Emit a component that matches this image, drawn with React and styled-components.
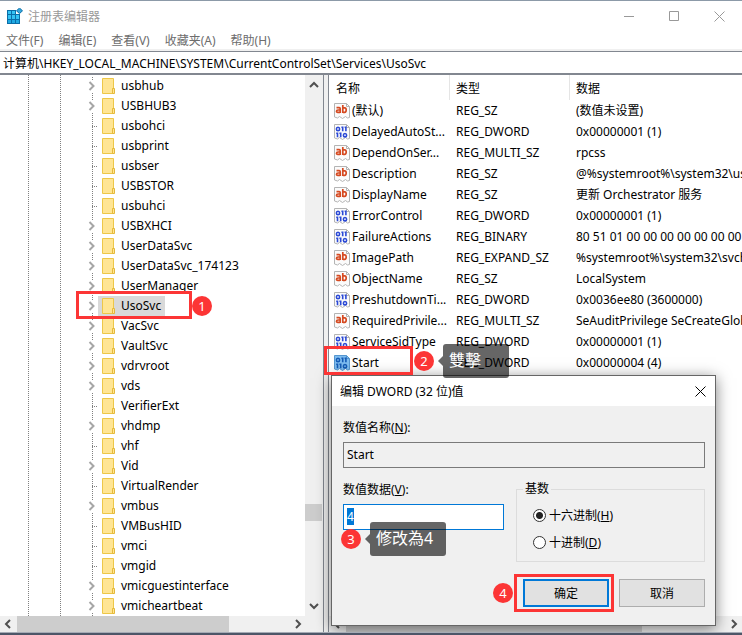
import React, { useEffect, useRef, useState } from "react";
import styled, { createGlobalStyle } from "styled-components";

const GlobalStyle = createGlobalStyle`
  body {
    margin: 0;
    background-color: #4d5668;
    color: #000;
    font-family: "Noto Sans", "Noto Sans CJK SC", sans-serif;
    font-size: 12px;
  }
  button,
  input {
    font-family: inherit;
    font-size: inherit;
    color: inherit;
  }
  * {
    box-sizing: border-box;
  }
`;
const Window = styled.div`
  width: 100%;
  background-color: #fff;
  border-top: 1px solid #8c9aa8;
  border-bottom: 1px solid #a5abb5;
  overflow: hidden;
`;
const TitleBar = styled.header`
  display: flex;
  height: 30px;
  align-items: center;
  padding-left: 7px;
  color: #999;
`;
const Title = styled.h1`
  flex: 1;
  margin: 0 0 0 5px;
  font-size: 12px;
  font-weight: normal;
`;
const CaptionButton = styled.button`
  display: flex;
  width: ${(prop) => prop.$width}px;
  height: 30px;
  padding: 0;
  justify-content: center;
  align-items: center;
  border: none;
  background-color: transparent;
`;
const MenuBar = styled.nav`
  display: flex;
  height: 20px;
  align-items: center;
  padding: 1px 0 0 6px;
  gap: 15px;
  border-bottom: 2px solid #f0f0f0;
`;
const MenuItem = styled.button`
  padding: 0;
  border: none;
  background-color: transparent;
  color: #6d6d6d;
  line-height: 18px;
`;
const Address = styled.input`
  display: block;
  width: 100%;
  height: 24px;
  padding: 0 3px;
  border: solid #828790;
  border-width: 1px 0 2px;
  outline: none;
  background-color: #fff;
`;
const Content = styled.main`
  position: relative;
  display: flex;
  background-color: #f0f0f0;
`;
const TreePane = styled.section`
  display: grid;
  flex: none;
  width: 324px;
  grid-template-columns: 1fr 18px;
  grid-template-rows: 1fr 16px;
  border-right: 1px solid #828790;
`;
const Tree = styled.ul`
  margin: 0;
  padding: 1px 0 0;
  list-style: none;
  background-color: #fff;
  background-image: repeating-linear-gradient(
      #808080 0 1px,
      transparent 1px 2px
    ),
    repeating-linear-gradient(#808080 0 1px, transparent 1px 2px);
  background-size: 1px 100%;
  background-repeat: no-repeat;
  background-position: 28px 0, 60px 0;
`;
const TreeRow = styled.li`
  display: flex;
  height: 20px;
  align-items: center;
  padding-left: 87px;
`;
const KeyButton = styled.button`
  display: flex;
  height: 20px;
  align-items: center;
  gap: 7px;
  padding: 0 4px;
  border: none;
  background-color: ${(prop) => (prop.$selected ? "#d9d9d9" : "transparent")};
  line-height: 18px;
  white-space: nowrap;
`;
const ListPane = styled.section`
  display: flex;
  flex: 1;
  min-width: 0;
  margin-left: 4px;
  flex-direction: column;
  border-left: 1px solid #828790;
  background-color: #fff;
`;
const ListBody = styled.div`
  flex: 1;
  overflow: hidden;
`;
const Table = styled.table`
  width: 100%;
  table-layout: fixed;
  border-collapse: separate;
  border-spacing: 0;
`;
const HeadCell = styled.th`
  width: ${(prop) => prop.$width || "auto"};
  height: 25px;
  padding: 0 0 0 ${(prop) => prop.$pad || 6}px;
  border-right: ${(prop) => (prop.$width ? "1px solid #e5e5e5" : "none")};
  font-weight: normal;
  text-align: left;
`;
const Cell = styled.td`
  height: 21px;
  padding: 0 0 0 6px;
  line-height: 18px;
  overflow: hidden;
  white-space: nowrap;
`;
const NameCell = styled.div`
  display: flex;
  align-items: center;
  gap: 2px;
  margin-left: -1px;
`;
const VScroll = styled.div`
  display: flex;
  flex-direction: column;
  align-items: center;
  width: 17px;
  padding: 2px 0;
  background-color: #f0f0f0;
`;
const HScroll = styled.div`
  display: flex;
  grid-column: 1 / -1;
  height: 16px;
  align-items: center;
  background-color: #f0f0f0;
`;
const Track = styled.div`
  display: flex;
  flex: 1;
  align-self: stretch;
  justify-content: ${(prop) => (prop.$end ? "flex-end" : "flex-start")};
  flex-direction: ${(prop) => (prop.$vertical ? "column" : "row")};
`;
const Thumb = styled.div`
  width: ${(prop) => prop.$width};
  height: ${(prop) => prop.$height};
  margin-bottom: ${(prop) => prop.$gap || "0"};
  background-color: #cdcdcd;
`;
const ScrollButton = styled.button`
  display: flex;
  flex: none;
  width: 17px;
  height: 16px;
  padding: 0;
  justify-content: center;
  align-items: center;
  border: none;
  background-color: transparent;
`;
const Dialog = styled.form`
  position: absolute;
  left: 331px;
  top: 300px;
  width: 385px;
  border: 1px solid #666;
  background-color: #f0f0f0;
  box-shadow: 0 3px 14px rgba(0, 0, 0, 0.5);
`;
const DialogTitle = styled.div`
  display: flex;
  height: 30px;
  align-items: center;
  justify-content: space-between;
  padding-left: 8px;
  background-color: #fff;
`;
const DialogBody = styled.div`
  padding: 12px 10px 18px 11px;
`;
const Columns = styled.div`
  display: flex;
  justify-content: space-between;
  margin-top: 12px;
`;
const Label = styled.label`
  display: block;
  height: 18px;
  line-height: 20px;
`;
const TextInput = styled.input`
  display: block;
  width: 100%;
  height: 26px;
  margin-top: 6px;
  padding: 0 3px 2px;
  border: 1px solid ${(prop) => (prop.$active ? "#0078d7" : "#7a7a7a")};
  outline: none;
  background-color: ${(prop) => (prop.$active ? "#fff" : "#f0f0f0")};
  &::selection {
    background-color: #0078d7;
    color: #fff;
  }
`;
const DataField = styled.div`
  width: 161px;
`;
const Group = styled.fieldset`
  width: 189px;
  height: 82px;
  margin: 0;
  padding: 8px 0 0 16px;
  border: 1px solid #dcdcdc;
`;
const Legend = styled.legend`
  margin-left: -10px;
  padding: 0 2px;
  line-height: 18px;
`;
const RadioLabel = styled.label`
  display: flex;
  align-items: center;
  gap: 3px;
  height: 18px;
  margin-bottom: 9px;
`;
const Radio = styled.input`
  appearance: none;
  width: 13px;
  height: 13px;
  margin: 0;
  border: 1px solid #333;
  border-radius: 50%;
  background-color: #fff;
  &:checked {
    background-image: radial-gradient(#222 0 3px, transparent 4px);
  }
`;
const Actions = styled.div`
  display: flex;
  justify-content: flex-end;
  gap: 10px;
  margin-top: 17px;
`;
const DialogButton = styled.button`
  width: 86px;
  height: 28px;
  padding: 0;
  border: ${(prop) => (prop.$primary ? "2px solid #0078d7" : "1px solid #adadad")};
  background-color: #e1e1e1;
`;
// tutorial marks drawn on top of the window
const Frame = styled.div`
  position: absolute;
  left: ${(prop) => prop.$x}px;
  top: ${(prop) => prop.$y}px;
  width: ${(prop) => prop.$w}px;
  height: ${(prop) => prop.$h}px;
  border: 3px solid #fc3535;
  pointer-events: none;
`;
const Badge = styled.span`
  position: absolute;
  left: ${(prop) => prop.$x}px;
  top: ${(prop) => prop.$y}px;
  width: 20px;
  height: 20px;
  border-radius: 50%;
  background-color: #fc3535;
  color: #fff;
  font-size: 13px;
  line-height: 20px;
  text-align: center;
`;
const Tip = styled.span`
  position: absolute;
  left: ${(prop) => prop.$x}px;
  top: ${(prop) => prop.$y}px;
  min-width: ${(prop) => prop.$w}px;
  height: 34px;
  padding: 0 6px;
  border-radius: 3px;
  background-color: rgba(0, 0, 0, 0.6);
  color: #fff;
  font-family: "Noto Sans", "Noto Sans CJK TC", sans-serif;
  font-size: 16px;
  line-height: 33px;
  white-space: nowrap;
  &::before {
    content: "";
    position: absolute;
    left: -5px;
    top: 12px;
    border: solid transparent;
    border-width: 5px 5px 5px 0;
    border-right-color: rgba(0, 0, 0, 0.6);
  }
`;

const keys = [
  ["usbhub", true],
  ["USBHUB3", true],
  ["usbohci", false],
  ["usbprint", false],
  ["usbser", false],
  ["USBSTOR", false],
  ["usbuhci", false],
  ["USBXHCI", true],
  ["UserDataSvc", true],
  ["UserDataSvc_174123", true],
  ["UserManager", true],
  ["UsoSvc", true],
  ["VacSvc", true],
  ["VaultSvc", true],
  ["vdrvroot", true],
  ["vds", true],
  ["VerifierExt", false],
  ["vhdmp", true],
  ["vhf", false],
  ["Vid", true],
  ["VirtualRender", false],
  ["vmbus", true],
  ["VMBusHID", false],
  ["vmci", false],
  ["vmgid", false],
  ["vmicguestinterface", true],
  ["vmicheartbeat", true],
];

const values = [
  ["(默认)", "REG_SZ", "(数值未设置)"],
  ["DelayedAutoSt...", "REG_DWORD", "0x00000001 (1)"],
  ["DependOnSer...", "REG_MULTI_SZ", "rpcss"],
  ["Description", "REG_SZ", "@%systemroot%\\system32\\usosvc.dll,-101"],
  ["DisplayName", "REG_SZ", "更新 Orchestrator 服务"],
  ["ErrorControl", "REG_DWORD", "0x00000001 (1)"],
  ["FailureActions", "REG_BINARY", "80 51 01 00 00 00 00 00 00 00 00 00"],
  ["ImagePath", "REG_EXPAND_SZ", "%systemroot%\\system32\\svchost.exe"],
  ["ObjectName", "REG_SZ", "LocalSystem"],
  ["PreshutdownTi...", "REG_DWORD", "0x0036ee80 (3600000)"],
  ["RequiredPrivile...", "REG_MULTI_SZ", "SeAuditPrivilege SeCreateGlobalPrivilege"],
  ["ServiceSidType", "REG_DWORD", "0x00000001 (1)"],
  ["Start", "REG_DWORD", "0x00000004 (4)"],
];

const menus = ["文件(F)", "编辑(E)", "查看(V)", "收藏夹(A)", "帮助(H)"];

function RegeditIcon() {
  return (
    <svg width="16" height="16" viewBox="0 0 16 16">
      <path d="M0 2h9v4h4v10H0z" fill="#0a6ea8" />
      <g fill="#35c3f3">
        <path d="M1 3h3v3H1zM5 3h3v3H5zM1 7h3v4H1zM5 7h3v4H5zM9 7h3v4H9z" />
        <path d="M1 12h3v3H1zM5 12h3v3H5zM9 12h3v3H9z" fill="#1fa9e2" />
      </g>
      <path d="M12.5 0L15.5 2.8l-3 2.8-3-2.8z" fill="#35a8dc" stroke="#0a6ea8" />
    </svg>
  );
}

function FolderIcon() {
  return (
    <svg width="12" height="16" viewBox="0 0 12 16" overflow="visible">
      <path d="M.5.5h11v15H.5z" fill="#ffe594" stroke="#edc748" />
      <path d="M10.5 10.5h2v5h-2z" fill="#ffe594" stroke="#e5b93a" />
    </svg>
  );
}

// expandable keys get a chevron, the others a dotted branch
function Branch({ expandable }) {
  return (
    <svg width="11" height="20" viewBox="0 0 11 20">
      {expandable ? (
        <>
          <path d="M5.5 1v3M5.5 17v3" stroke="#808080" strokeDasharray="1 1" />
          <path d="M2.5 6l4 4-4 4" fill="none" stroke="#a6a6a6" strokeWidth="2" />
        </>
      ) : (
        <path
          d="M5.5 1v19M5 10.5h6"
          stroke="#808080"
          strokeDasharray="1 1"
          fill="none"
        />
      )}
    </svg>
  );
}

function ValueIcon({ text, selected }) {
  return (
    <svg width="16" height="16" viewBox="0 0 16 16">
      <path
        d="M.5.5h12l3 3v11l-2 .5-2-1.500-3 2-3-2-2 1.500-3-1z"
        fill={selected ? "#7fbdf0" : "#fbfbfb"}
        stroke={selected ? "#5596cf" : "#b4b4b4"}
      />
      <path
        d="M12.500.5v3h3"
        fill="none"
        stroke={selected ? "#5596cf" : "#b4b4b4"}
      />
      {text ? (
        <g fill="none" stroke="#d64a21" strokeWidth="1.700">
          <path d="M2.500 4.700h2.700q1 0 1 1v4.300M6 7H4q-1.500 0-1.500 1.200T4 9.300h2" />
          <path d="M8.800 2v8M9 4.800h1.700q1.500 0 1.500 2.250T10.700 9.300H9" />
        </g>
      ) : (
        <g fill="none" stroke={selected ? "#155bb5" : "#2b49d6"} strokeWidth="1.600">
          <ellipse cx="4" cy="5" rx="1.600" ry="1.700" />
          <path d="M7.400 3.300h1.300v4M10.600 3.300h1.300v4M2.200 9.300h1.300v4M5.400 9.300h1.300v4" />
          <ellipse cx="11" cy="11.200" rx="1.600" ry="1.700" />
        </g>
      )}
    </svg>
  );
}

const arrows = {
  left: "M6 1L2 5l4 4",
  right: "M3 1l4 4-4 4",
  up: "M1 7l4-4 4 4",
  down: "M1 3l4 4 4-4",
};

function Arrow({ to }) {
  return (
    <ScrollButton type="button" aria-label={to}>
      <svg width="10" height="10" viewBox="0 0 10 10">
        <path d={arrows[to]} fill="none" stroke="#505050" strokeWidth="2" />
      </svg>
    </ScrollButton>
  );
}

function CloseIcon({ color }) {
  return (
    <svg width="11" height="11" viewBox="0 0 11 11">
      <path d="M.5.5l10 10M10.5.5l-10 10" stroke={color} />
    </svg>
  );
}

function EditDialog() {
  const [data, setData] = useState("4");
  const [base, setBase] = useState("hex");
  const dataRef = useRef(null);

  useEffect(() => {
    dataRef.current.focus();
    dataRef.current.select();
  }, []);

  return (
    <Dialog onSubmit={(e) => e.preventDefault()}>
      <DialogTitle>
        编辑 DWORD (32 位)值
        <CaptionButton type="button" $width={30} aria-label="关闭">
          <CloseIcon color="#000" />
        </CaptionButton>
      </DialogTitle>
      <DialogBody>
        <Label htmlFor="valueName">
          数值名称(<u>N</u>):
        </Label>
        <TextInput id="valueName" value="Start" readOnly />
        <Columns>
          <DataField>
            <Label htmlFor="valueData">
              数值数据(<u>V</u>):
            </Label>
            <TextInput
              id="valueData"
              ref={dataRef}
              $active
              value={data}
              onChange={(e) => setData(e.target.value)}
            />
          </DataField>
          <Group>
            <Legend>基数</Legend>
            <RadioLabel>
              <Radio
                type="radio"
                name="base"
                checked={base === "hex"}
                onChange={() => setBase("hex")}
              />
              <span>
                十六进制(<u>H</u>)
              </span>
            </RadioLabel>
            <RadioLabel>
              <Radio
                type="radio"
                name="base"
                checked={base === "dec"}
                onChange={() => setBase("dec")}
              />
              <span>
                十进制(<u>D</u>)
              </span>
            </RadioLabel>
          </Group>
        </Columns>
        <Actions>
          <DialogButton type="submit" $primary>
            确定
          </DialogButton>
          <DialogButton type="button">取消</DialogButton>
        </Actions>
      </DialogBody>
    </Dialog>
  );
}

function App() {
  const [selected, setSelected] = useState("UsoSvc");

  return (
    <>
      <GlobalStyle />
      <Window>
        <TitleBar>
          <RegeditIcon />
          <Title>注册表编辑器</Title>
          <CaptionButton $width={45} aria-label="最小化">
            <svg width="10" height="10" viewBox="0 0 10 10">
              <path d="M0 5.5h10" stroke="#999" />
            </svg>
          </CaptionButton>
          <CaptionButton $width={46} aria-label="最大化">
            <svg width="10" height="10" viewBox="0 0 10 10">
              <path d="M.5.5h9v9h-9z" fill="none" stroke="#999" />
            </svg>
          </CaptionButton>
          <CaptionButton $width={45} aria-label="关闭">
            <CloseIcon color="#999" />
          </CaptionButton>
        </TitleBar>
        <MenuBar>
          {menus.map((menu) => (
            <MenuItem key={menu}>{menu}</MenuItem>
          ))}
        </MenuBar>
        <Address
          aria-label="地址"
          defaultValue="计算机\HKEY_LOCAL_MACHINE\SYSTEM\CurrentControlSet\Services\UsoSvc"
        />
        <Content>
          <TreePane>
            <Tree>
              {keys.map(([name, expandable]) => (
                <TreeRow key={name}>
                  <Branch expandable={expandable} />
                  <KeyButton
                    $selected={name === selected}
                    onClick={() => setSelected(name)}
                  >
                    <FolderIcon />
                    {name}
                  </KeyButton>
                </TreeRow>
              ))}
            </Tree>
            <VScroll>
              <Arrow to="up" />
              <Track $vertical $end>
                <Thumb $width="17px" $height="17px" $gap="77px" />
              </Track>
              <Arrow to="down" />
            </VScroll>
            <HScroll>
              <Arrow to="left" />
              <Track>
                <Thumb $width="78%" $height="16px" />
              </Track>
              <Arrow to="right" />
              <ScrollButton as="span" />
            </HScroll>
          </TreePane>
          <ListPane>
            <ListBody>
              <Table>
                <thead>
                  <tr>
                    <HeadCell $width="121px" $pad={7}>
                      名称
                    </HeadCell>
                    <HeadCell $width="120px">类型</HeadCell>
                    <HeadCell>数据</HeadCell>
                  </tr>
                </thead>
                <tbody>
                  {values.map(([name, type, data]) => (
                    <tr key={name}>
                      <Cell>
                        <NameCell>
                          <ValueIcon
                            text={!/DWORD|BINARY/.test(type)}
                            selected={name === "Start"}
                          />
                          {name}
                        </NameCell>
                      </Cell>
                      <Cell>{type}</Cell>
                      <Cell>{data}</Cell>
                    </tr>
                  ))}
                </tbody>
              </Table>
            </ListBody>
            <HScroll>
              <Arrow to="left" />
              <Track>
                <Thumb $width="78%" $height="16px" />
              </Track>
              <Arrow to="right" />
            </HScroll>
          </ListPane>
          <Frame $x={76} $y={216} $w={116} $h={28} />
          <Badge $x={192} $y={221}>1</Badge>
          <EditDialog />
          <Frame $x={324} $y={271} $w={89} $h={29} />
          <Badge $x={414} $y={276}>2</Badge>
          <Tip $x={443} $y={269} $w={66}>雙擊</Tip>
          <Badge $x={341} $y={454}>3</Badge>
          <Tip $x={370} $y={447} $w={76}>修改為4</Tip>
          <Badge $x={493} $y={508}>4</Badge>
          <Frame $x={514} $y={499} $w={100} $h={38} />
        </Content>
      </Window>
    </>
  );
}

export default App;
